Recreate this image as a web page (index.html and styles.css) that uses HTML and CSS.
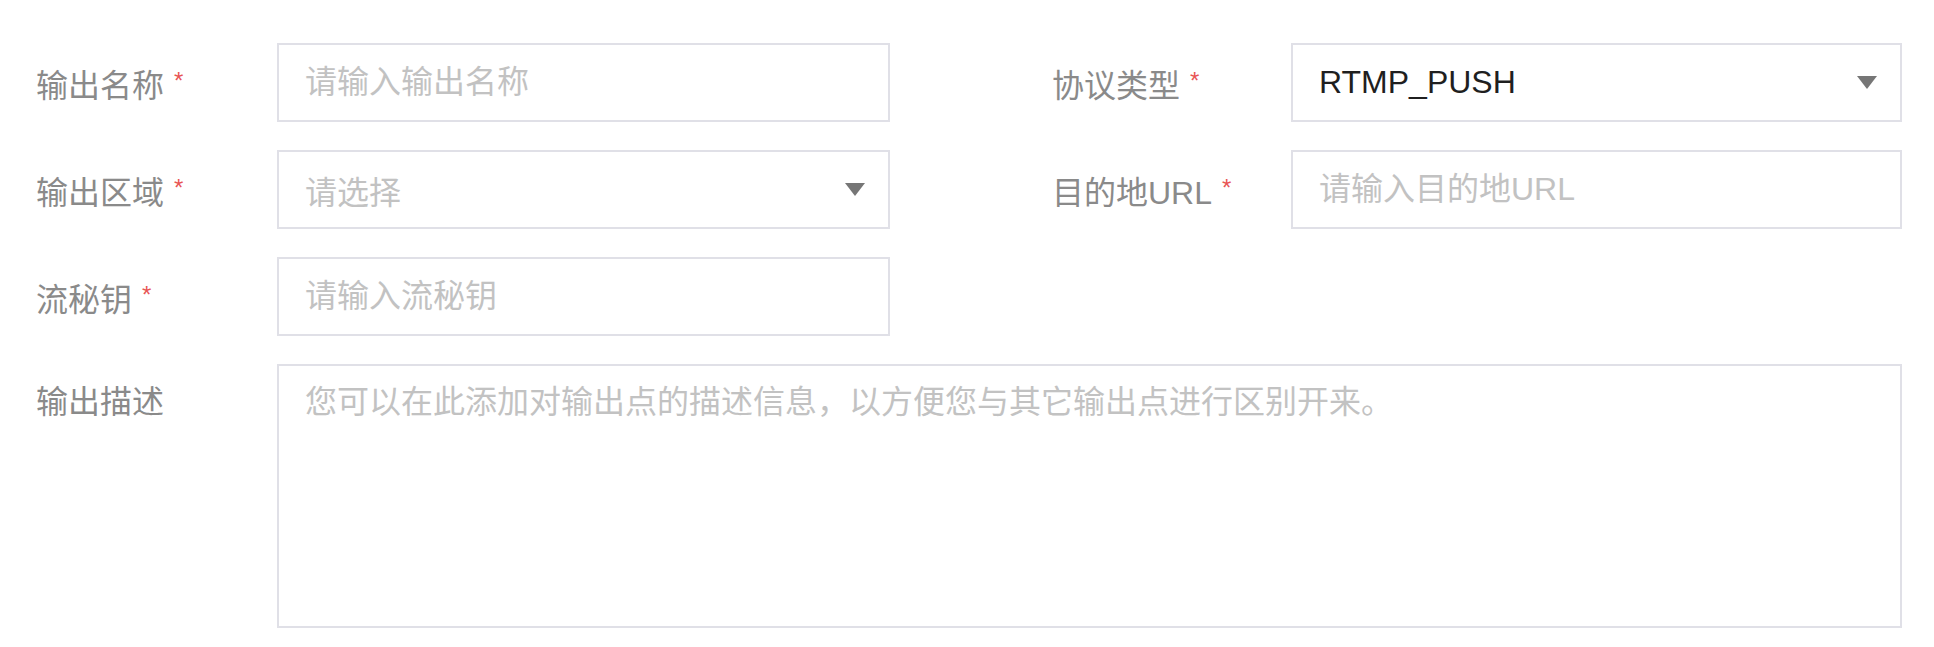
FILE: index.html
```html
<!DOCTYPE html>
<html lang="zh-CN">
<head>
<meta charset="utf-8">
<title>输出配置</title>
<link rel="stylesheet" href="styles.css">
</head>
<body>
<form class="form">
  <label class="label">输出名称<span class="req">*</span></label>
  <div class="cell"><input class="field" type="text" placeholder="请输入输出名称"></div>
  <label class="label">协议类型<span class="req">*</span></label>
  <div class="cell"><div class="field select value">RTMP_PUSH<span class="arrow"></span></div></div>

  <label class="label">输出区域<span class="req">*</span></label>
  <div class="cell"><div class="field select placeholder">请选择<span class="arrow"></span></div></div>
  <label class="label">目的地URL<span class="req">*</span></label>
  <div class="cell"><input class="field" type="text" placeholder="请输入目的地URL"></div>

  <label class="label">流秘钥<span class="req">*</span></label>
  <div class="cell"><input class="field" type="text" placeholder="请输入流秘钥"></div>
  <div class="cell empty"></div>
  <div class="cell empty"></div>

  <label class="label top">输出描述</label>
  <div class="cell wide"><textarea class="field area" placeholder="您可以在此添加对输出点的描述信息，以方便您与其它输出点进行区别开来。"></textarea></div>
</form>
</body>
</html>
```

FILE: styles.css
```css
html, body {
  margin: 0;
  padding: 0;
  background: #ffffff;
}

body {
  font-family: "Liberation Sans", "Noto Sans CJK SC", sans-serif;
  font-size: 32px;
  color: #888888;
}

.form {
  display: grid;
  grid-template-columns: 241px 775px 239px 611px;
  grid-auto-rows: 79px;
  row-gap: 28px;
  padding: 43px 0 0 36px;
}

.label {
  display: flex;
  align-items: center;
  color: #8a8a8a;
  font-size: 32px;
  white-space: nowrap;
}

.label.top {
  align-items: flex-start;
  padding-top: 12px;
}

.req {
  color: #e85555;
  font-size: 24px;
  margin-left: 10px;
  margin-top: -4px;
}

.cell {
  display: flex;
}

.field {
  box-sizing: border-box;
  width: 613px;
  height: 79px;
  border: 2px solid #e0e0e7;
  background: #ffffff;
  padding: 0 26px;
  font-family: "Liberation Sans", "Noto Sans CJK SC", sans-serif;
  font-size: 32px;
  color: #222222;
  outline: none;
  margin: 0;
}

.cell:nth-child(8) .field,
.cell:nth-child(4) .field {
  width: 611px;
}

.field::placeholder {
  color: #c2c2c2;
  opacity: 1;
}

.select {
  display: flex;
  align-items: center;
  justify-content: space-between;
  padding-right: 23px;
}

.select.placeholder {
  color: #c2c2c2;
}

.select.value {
  color: #1f1f1f;
}

.arrow {
  width: 0;
  height: 0;
  border-left: 10px solid transparent;
  border-right: 10px solid transparent;
  border-top: 13px solid #767676;
}

.wide {
  grid-column: 2 / 5;
  grid-row: span 3;
}

.area {
  width: 1625px;
  height: 264px;
  padding: 12px 26px;
  resize: none;
  line-height: 48px;
}
```
